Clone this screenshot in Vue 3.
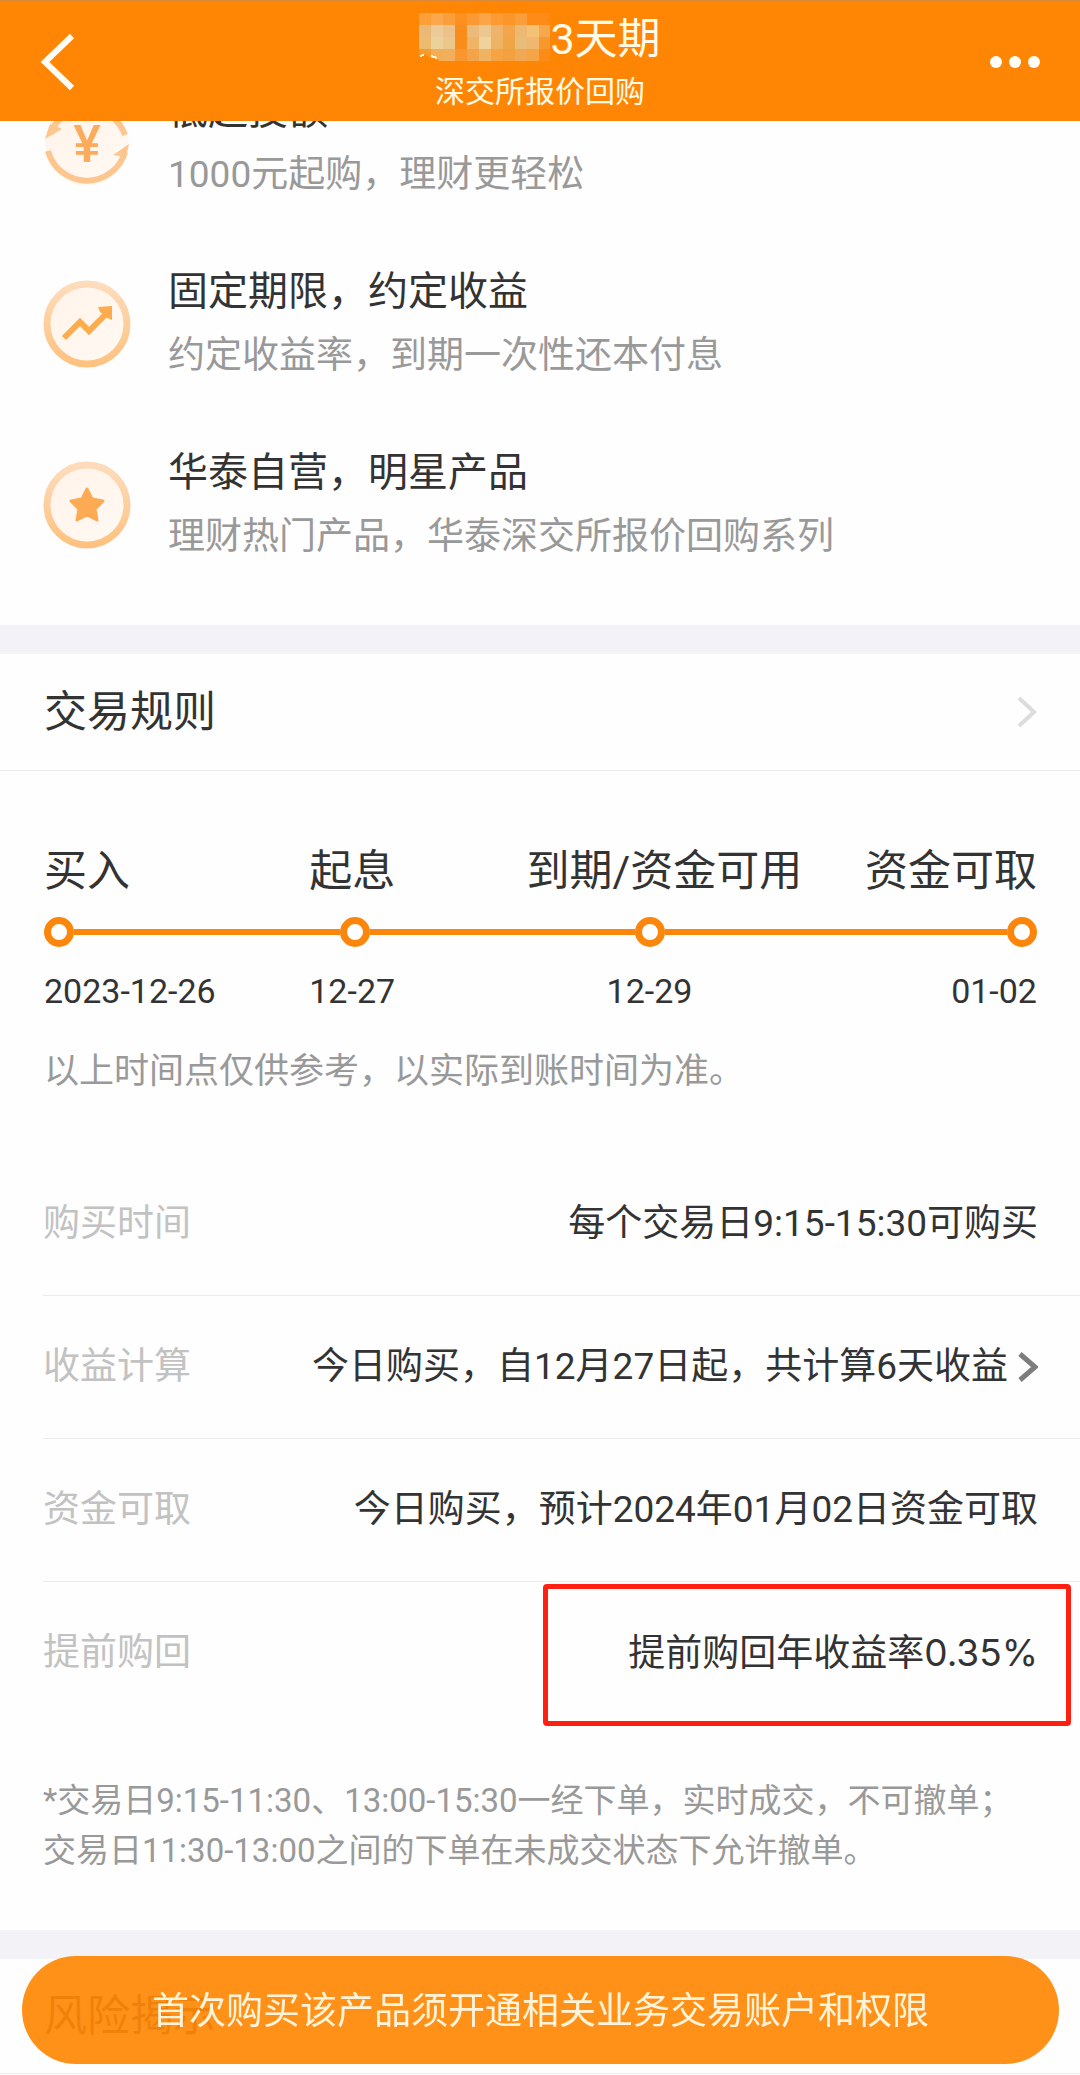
<script setup>
const features = [
  { icon: 'yen', title: '低起投额', desc: '1000元起购，理财更轻松' },
  { icon: 'trend', title: '固定期限，约定收益', desc: '约定收益率，到期一次性还本付息' },
  { icon: 'star', title: '华泰自营，明星产品', desc: '理财热门产品，华泰深交所报价回购系列' }
]

const steps = [
  { label: '买入', date: '2023-12-26' },
  { label: '起息', date: '12-27' },
  { label: '到期/资金可用', date: '12-29' },
  { label: '资金可取', date: '01-02' }
]

const rules = [
  { name: '购买时间', value: '每个交易日9:15-15:30可购买' },
  { name: '收益计算', value: '今日购买，自12月27日起，共计算6天收益', more: true },
  { name: '资金可取', value: '今日购买，预计2024年01月02日资金可取' },
  { name: '提前购回', value: '提前购回年收益率', rate: '0.35%', marked: true }
]

// Mosaic that hides the product name, one colour per cell
const mosaic = [
  ['#fb9f38', '#fca74e', '#fa9e3b', '#fc9120', '#fb9a33', '#fba548', '#fb9b31', '#fb9629', '#fb9d38', '#fd8b15', '#fd8b15'],
  ['#eab978', '#eccb98', '#ecc28a', '#f98d1b', '#ecbb7a', '#edc792', '#efb36b', '#f4a54c', '#edb872', '#f4c177', '#f7a74d'],
  ['#eabb70', '#ebd29b', '#ebc88a', '#f98d1b', '#efb468', '#f0d39c', '#efb463', '#efa746', '#e9bc77', '#efb770', '#f9982f'],
  ['#f99a2c', '#f3ad55', '#f2ae5b', '#fa9630', '#f3a44a', '#f0b361', '#f5a343', '#f5a040', '#f2a850', '#f3a547', '#fd8b15']
]
</script>

<template>
  <div class="page">
    <header class="topbar">
      <button class="icon-btn" type="button" aria-label="返回">
        <svg width="36" height="60" viewBox="0 0 36 60" fill="none" stroke="#fffdf5" stroke-width="6">
          <path d="M32 4 5 30 32 56" />
        </svg>
      </button>
      <div class="heading">
        <h1 class="name">
          <svg class="mosaic" width="131" height="48" viewBox="0 0 131 48" shape-rendering="crispEdges" aria-hidden="true">
            <template v-for="(line, y) in mosaic" :key="y">
              <rect v-for="(c, x) in line" :key="x" :x="x * 12" :y="y * 12" width="12" height="12" :fill="c" />
            </template>
            <path d="M0 43l7-1 3 3 6-1 4 3v1H0z" fill="#ff8605" />
            <path d="M1 43l4-1M12 43l6 2" stroke="#fff6d8" stroke-width="2" />
          </svg>
          <span>3天期</span>
        </h1>
        <p class="market">深交所报价回购</p>
      </div>
      <button class="icon-btn icon-btn--end" type="button" aria-label="更多">
        <svg width="50" height="12" viewBox="0 0 50 12" fill="#fffdf5">
          <circle cx="6" cy="6" r="6" /><circle cx="25" cy="6" r="6" /><circle cx="44" cy="6" r="6" />
        </svg>
      </button>
    </header>

    <main>
      <ul class="features">
        <li v-for="f in features" :key="f.title" class="feature">
          <svg width="88" height="88" viewBox="0 0 88 88" fill="none" aria-hidden="true">
            <defs>
              <linearGradient :id="'ring-' + f.icon" x1="0" y1="0" x2="0" y2="1">
                <stop offset="0" stop-color="#fddcbc" />
                <stop offset="1" stop-color="#fdc280" />
              </linearGradient>
              <linearGradient :id="'disc-' + f.icon" x1="0" y1="0" x2="1" y2="1">
                <stop offset="0" stop-color="#fff3ea" />
                <stop offset="1" stop-color="#fffaf3" />
              </linearGradient>
            </defs>
            <template v-if="f.icon === 'yen'">
              <circle cx="44" cy="45" r="42" :fill="`url(#disc-${f.icon})`" />
              <path d="M5 52A40 40 0 0 0 82 53" stroke="#fdc68f" stroke-width="6" />
              <path d="M82 36A40 40 0 0 0 7 35" stroke="#fdc68f" stroke-width="6" />
              <path d="M86 45 83 58 70 56z" fill="#fdc68f" />
              <path d="M2 40 7 25 19 30z" fill="#fdc68f" />
              <text x="44" y="63" text-anchor="middle" class="yen">¥</text>
            </template>
            <template v-else>
              <circle cx="44" cy="44" r="40" :fill="`url(#disc-${f.icon})`" :stroke="`url(#ring-${f.icon})`" stroke-width="7" />
              <g v-if="f.icon === 'trend'" fill="#fcab4d">
                <path d="M21 58 37 42 46 51 63 34" stroke="#fcab4d" stroke-width="6" fill="none" />
                <path d="M55 27 69 26 69 40 64 38 57 32z" />
              </g>
              <path
                v-else
                d="M44 28 49 38 60 40 52 48 54 59 44 54 34 59 36 48 28 40 39 38z"
                fill="#fcab54"
                stroke="#fcab54"
                stroke-width="3"
                stroke-linejoin="round"
              />
            </template>
          </svg>
          <div class="feature-text">
            <h2>{{ f.title }}</h2>
            <p>{{ f.desc }}</p>
          </div>
        </li>
      </ul>

      <section class="block">
        <a class="block-head" href="#rules">
          <h2>交易规则</h2>
          <svg width="22" height="34" viewBox="0 0 22 34" fill="none" stroke="#dcdcdc" stroke-width="4">
            <path d="M3 3 18 17 3 31" />
          </svg>
        </a>

        <div id="rules" class="timeline">
          <div class="labels">
            <span v-for="s in steps" :key="s.label">{{ s.label }}</span>
          </div>
          <div class="track" aria-hidden="true">
            <i class="dot"></i><i class="seg"></i><i class="dot"></i><i class="seg"></i><i class="dot"></i><i class="seg seg--long"></i><i class="dot"></i>
          </div>
          <div class="dates">
            <time v-for="s in steps" :key="s.date">{{ s.date }}</time>
          </div>
          <p class="notice">以上时间点仅供参考，以实际到账时间为准。</p>
        </div>

        <dl class="rules">
          <div v-for="r in rules" :key="r.name" class="rule">
            <dt>{{ r.name }}</dt>
            <dd>
              <span>{{ r.value }}<b v-if="r.rate" class="rate">{{ r.rate }}</b></span>
              <svg v-if="r.more" width="20" height="34" viewBox="0 0 20 34" fill="none" stroke="#7d7d7d" stroke-width="5">
                <path d="M2 4 17 17 2 30" />
              </svg>
            </dd>
            <div v-if="r.marked" class="marker"></div>
          </div>
        </dl>

        <p class="footnote">
          *交易日9:15-11:30、13:00-15:30一经下单，实时成交，不可撤单；<br />
          交易日11:30-13:00之间的下单在未成交状态下允许撤单。
        </p>
      </section>

      <section class="block">
        <div class="block-head block-head--risk"><h2>风险揭示</h2></div>
      </section>
    </main>

    <button class="cta" type="button">首次购买该产品须开通相关业务交易账户和权限</button>
  </div>
</template>

<style>
body {
  margin: 0;
  background: #fefefe;
}
</style>

<style scoped>
.page {
  font-family: Roboto, "Noto Sans CJK SC", sans-serif;
  color: #333;
  overflow: hidden;
}
h1,
h2,
p,
ul,
dl,
dd {
  margin: 0;
  padding: 0;
  font-weight: 400;
}
button {
  border: 0;
  font: inherit;
  cursor: pointer;
}
svg {
  display: block;
  flex: none;
}

.topbar {
  position: fixed;
  z-index: 2;
  top: 0;
  left: 0;
  right: 0;
  box-sizing: border-box;
  height: 121px;
  padding: 2px 40px 0;
  display: grid;
  grid-template-columns: 1fr auto 1fr;
  align-items: center;
  background: #ff8605;
  border-top: 1px solid #d98a3a;
  color: #fffbe6;
}
.icon-btn {
  padding: 0;
  background: none;
  justify-self: start;
}
.icon-btn--end {
  justify-self: end;
}
.heading {
  text-align: center;
}
.name {
  display: flex;
  align-items: center;
  font-size: 43px;
  line-height: 60px;
}
.mosaic {
  margin-bottom: 4px;
}
.market {
  font-size: 30px;
  line-height: 46px;
}

.features {
  list-style: none;
  padding: 79px 43px 56px;
  display: flex;
  flex-direction: column;
  gap: 53px;
}
.feature {
  display: flex;
  align-items: center;
  gap: 37px;
}
.feature-text h2 {
  font-size: 40px;
  line-height: 64px;
}
.feature-text p {
  font-size: 37px;
  line-height: 64px;
  color: #999;
}
.yen {
  font: 500 52px Roboto, sans-serif;
  fill: #fcab5c;
}

.block {
  border-top: 29px solid #f2f2f7;
}
.block-head {
  display: flex;
  align-items: center;
  justify-content: space-between;
  height: 116px;
  padding: 0 42px 0 44px;
  border-bottom: 1px solid #ebebeb;
  color: inherit;
  text-decoration: none;
}
.block-head h2 {
  font-size: 43px;
  line-height: 60px;
}

.timeline {
  padding: 70px 43px 0 44px;
}
.labels,
.dates {
  display: grid;
  white-space: nowrap;
}
.labels {
  grid-template-columns: 265fr 217fr 338fr 172fr;
  font-size: 43px;
  line-height: 60px;
}
.dates {
  grid-template-columns: 265fr 297fr 258fr 172fr;
  margin-top: 24px;
  font-size: 34px;
  line-height: 40px;
}
.labels :last-child,
.dates :last-child {
  text-align: right;
}
.track {
  display: flex;
  align-items: center;
  margin-top: 16px;
}
.dot {
  box-sizing: border-box;
  width: 30px;
  height: 30px;
  border: 7px solid #fb860b;
  border-radius: 50%;
}
.seg {
  flex: 7;
  height: 6px;
  background: #fb860b;
}
.seg--long {
  flex: 9;
}
.notice {
  margin-top: 36px;
  font-size: 35px;
  line-height: 50px;
  color: #999;
}

.rules {
  margin-top: 56px;
  padding-left: 43px;
  font-size: 37px;
}
.rule {
  position: relative;
  display: flex;
  align-items: center;
  justify-content: space-between;
  height: 142px;
  padding-right: 42px;
  border-bottom: 1px solid #ebebeb;
}
.rule:last-child {
  border-bottom: 0;
}
.rule dt,
.rule dd span {
  line-height: 50px;
}
.rule dt {
  color: #c2c2c2;
}
.rule dd {
  display: flex;
  align-items: center;
  gap: 10px;
}
.rate {
  font-family: Inter, sans-serif;
  font-weight: 400;
}
.marker {
  position: absolute;
  top: 2px;
  right: 9px;
  width: 528px;
  height: 142px;
  box-sizing: border-box;
  border: 5px solid #ff2012;
  border-radius: 4px;
}

.footnote {
  padding: 52px 43px 54px;
  font-size: 33px;
  line-height: 50px;
  color: #999;
}

.block-head--risk {
  height: 114px;
}

.cta {
  position: fixed;
  z-index: 2;
  left: 22px;
  right: 21px;
  bottom: 11px;
  height: 108px;
  padding: 0 0 4px;
  border-radius: 54px;
  background: rgba(255, 136, 5, 0.925);
  color: #fff4da;
  font-size: 37px;
}
</style>
